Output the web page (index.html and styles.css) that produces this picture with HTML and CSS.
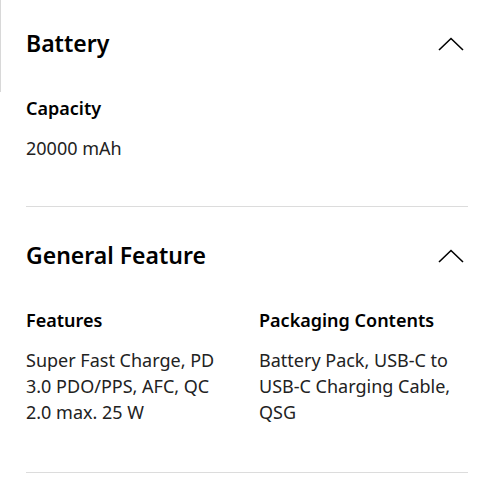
FILE: index.html
```html
<!DOCTYPE html>
<html lang="en">
<head>
    <meta charset="UTF-8">
    <meta name="viewport" content="width=device-width, initial-scale=1.0">
    <title>Specs</title>
    <link rel="stylesheet" href="styles.css">
</head>
<body>
    <div class="specs">
        <section class="spec first">
            <div class="spec-head">
                <h2>Battery</h2>
                <svg class="chevron" width="30" height="14" viewBox="0 0 30 14">
                    <polyline points="1,13 13,1.5 25,13" fill="none" stroke="#000" stroke-width="1.6"/>
                </svg>
            </div>
            <div class="spec-grid">
                <div class="spec-item">
                    <h3>Capacity</h3>
                    <p>20000 mAh</p>
                </div>
            </div>
        </section>

        <section class="spec">
            <div class="spec-head">
                <h2>General Feature</h2>
                <svg class="chevron" width="30" height="14" viewBox="0 0 30 14">
                    <polyline points="1,13 13,1.5 25,13" fill="none" stroke="#000" stroke-width="1.6"/>
                </svg>
            </div>
            <div class="spec-grid">
                <div class="spec-item">
                    <h3>Features</h3>
                    <p>Super Fast Charge, PD 3.0 PDO/PPS, AFC, QC 2.0 max. 25 W</p>
                </div>
                <div class="spec-item">
                    <h3>Packaging Contents</h3>
                    <p>Battery Pack, USB-C to USB-C Charging Cable, QSG</p>
                </div>
            </div>
        </section>
    </div>
</body>
</html>
```

FILE: styles.css
```css
body {
    margin: 0;
    background-color: #fff;
    color: #000;
    font-family: "Noto Sans", "Open Sans", Arial, sans-serif;
}
.specs {
    position: relative;
    padding: 0 32px 0 26px;
}
.specs::before {
    content: "";
    position: absolute;
    left: 0;
    top: 0;
    width: 1px;
    height: 92px;
    background-color: #d8d8d8;
}
.spec {
    padding: 33px 0 47px;
    border-bottom: 1px solid #dcdcdc;
}
.spec.first {
    padding: 28px 0 45px;
}
.spec-head {
    display: flex;
    justify-content: space-between;
    align-items: center;
    margin-bottom: 36px;
}
.spec-head h2 {
    margin: 0;
    font-size: 23px;
    line-height: 31px;
    font-weight: 600;
}
.chevron {
    display: block;
}
.spec-grid {
    display: grid;
    grid-template-columns: 1fr 1fr;
    column-gap: 24px;
}
.spec-item h3 {
    margin: 0 0 14px;
    font-size: 18px;
    line-height: 26px;
    font-weight: 600;
}
.spec-item p {
    margin: 0;
    font-size: 18px;
    line-height: 26px;
    color: #222;
}
```
